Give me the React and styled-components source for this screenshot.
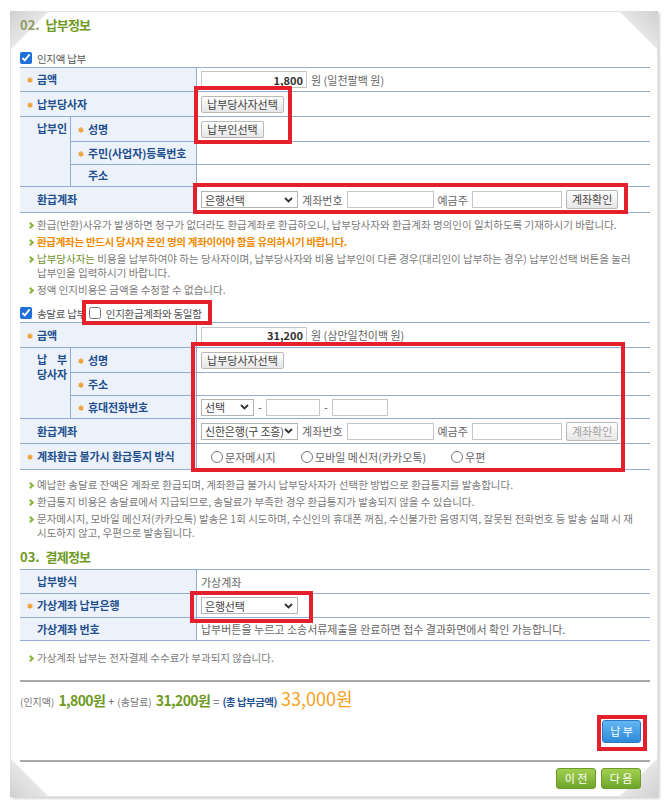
import React from "react";
import styled, { createGlobalStyle } from "styled-components";

const GlobalStyle = createGlobalStyle`
  body {
    margin: 0;
    background: #fff;
    font-family: "Noto Sans CJK KR", "Noto Sans", sans-serif;
  }
  * { box-sizing: border-box; }
`;

const Page = styled.div`
  width: 670px;
  height: 806px;
  padding: 11px 0 0 10px;
`;

const Frame = styled.div`
  position: relative;
  z-index: 0;
  width: 648px;
  height: 786px;
  border: 1px solid #e2e2e2;
  box-shadow: 2px 2px 2px rgba(0, 0, 0, 0.16);
  padding: 2px 7px 6px 9px;
  background: #fff;
`;

const cornerFill = {
  tl: "to bottom right",
  tr: "to bottom left",
  bl: "to top right",
  br: "to top left",
};

const Corner = styled.div`
  position: absolute;
  z-index: -1;
  width: 40px;
  height: 40px;
  ${(p) => (p.$at[0] === "t" ? "top: -1px;" : "bottom: -1px;")}
  ${(p) => (p.$at[1] === "l" ? "left: -1px;" : "right: -1px;")}
  background: linear-gradient(${(p) => cornerFill[p.$at]}, #d0d0d0 0%, #e6e6e6 48%, transparent 50%);
`;

const Annot = styled.div`
  position: absolute;
  border: 4px solid #e3202b;
  pointer-events: none;
`;

const SectionTitle = styled.h3`
  margin: ${(p) => p.$mt || 0}px 0 0;
  height: 20px;
  line-height: 20px;
  font-size: 13px;
  font-weight: 700;
  color: #6f9a1f;
  letter-spacing: -0.8px;
`;

const Num = styled.span`
  color: ${(p) => (p.$dim ? "#8e9b63" : "#6f9a1f")};
  letter-spacing: 0;
  margin-right: 6px;
`;

const CheckRow = styled.div`
  display: flex;
  align-items: center;
  height: 18px;
  margin-top: ${(p) => p.$mt}px;
  font-size: 10.5px;
  letter-spacing: -0.3px;
  color: #555;
  white-space: nowrap;
`;

const Check = styled.input`
  width: 12px;
  height: 12px;
  margin: 0 5px 0 0;
  accent-color: #1e6fd9;
`;

const CheckLabel = styled.label`
  display: flex;
  align-items: center;
  margin-left: ${(p) => p.$ml || 0}px;
`;

const FormTable = styled.table`
  width: 100%;
  border-collapse: separate;
  border-spacing: 0;
  table-layout: fixed;
  border-top: 1px solid #93acd3;
  margin-top: ${(p) => p.$mt || 0}px;
`;

const Row = styled.tr`
  height: ${(p) => p.$h || 24}px;
`;

const Th = styled.th`
  background: #edf2fa;
  border-bottom: 1px solid #93acd3;
  border-right: 1px solid #93acd3;
  text-align: left;
  vertical-align: ${(p) => (p.$top ? "top" : "middle")};
  padding: ${(p) => (p.$top ? "4px" : "0")} 0 0 7px;
  font-size: 11px;
  line-height: 15px;
  font-weight: 700;
  color: #1f4f8e;
  letter-spacing: -0.1px;
  white-space: nowrap;
`;

const Mark = styled.span`
  display: inline-block;
  width: 10px;
  vertical-align: 1px;
  line-height: 0;
`;

const SplitLine = styled.span`
  display: flex;
  justify-content: space-between;
  width: 30px;
  margin-left: 10px;
`;

const Sub = styled.span`
  display: block;
  margin-left: 10px;
`;

const Td = styled.td`
  border-bottom: 1px solid #93acd3;
  padding: 0 0 0 4px;
  font-size: 11px;
  color: #666;
  white-space: nowrap;
`;

const Field = styled.div`
  display: flex;
  align-items: center;
  gap: 4px;
  padding-left: ${(p) => p.$pl || 0}px;
`;

const TextInput = styled.input`
  width: ${(p) => p.$w}px;
  height: 17px;
  border: 1px solid #c6c6c6;
  padding: 0 3px;
  font-family: inherit;
  font-size: 11px;
  font-weight: ${(p) => (p.$bold ? 700 : 400)};
  color: #333;
  text-align: ${(p) => (p.$right ? "right" : "left")};
`;

const GrayButton = styled.button`
  height: ${(p) => p.$h || 17}px;
  padding: 0 5px;
  border: 1px solid #b9b9b9;
  border-radius: 2px;
  background: linear-gradient(#ffffff, #e6e6e6);
  font-family: inherit;
  font-size: 11px;
  line-height: 1;
  color: ${(p) => (p.$muted ? "#a0a0a0" : "#444")};
  white-space: nowrap;
`;

const SelectBox = styled.div`
  width: ${(p) => p.$w}px;
  height: 17px;
  border: 1px solid #b3b3b3;
  background: #fff;
  display: flex;
  align-items: center;
  justify-content: space-between;
  padding: 0 4px 0 3px;
  font-size: 11px;
  letter-spacing: -0.2px;
  color: #444;
  white-space: nowrap;
`;

const Dash = styled.span`
  width: 4px;
  text-align: center;
  color: #555;
`;

const RadioOption = styled.label`
  display: flex;
  align-items: center;
  width: ${(p) => (p.$w ? `${p.$w}px` : "auto")};
  color: #666;
  input {
    width: 12px;
    height: 12px;
    margin: 0 2px 0 0;
  }
`;

const Notes = styled.ul`
  list-style: none;
  margin: ${(p) => p.$mt}px 0 0;
  padding: 0;
`;

const Note = styled.li`
  position: relative;
  margin-top: 3px;
  padding-left: 17px;
  font-size: 10.5px;
  line-height: 14px;
  white-space: nowrap;
  color: ${(p) => (p.$warn ? "#f08a00" : "#7a7a7a")};
  font-weight: ${(p) => (p.$warn ? 700 : 400)};
  letter-spacing: ${(p) => (p.$warn ? "-0.3px" : "0")};
  &:first-child { margin-top: 0; }
  &::before {
    content: "";
    position: absolute;
    left: 8px;
    top: 5px;
    width: 3px;
    height: 3px;
    border-top: 2px solid #8bb33a;
    border-right: 2px solid #8bb33a;
    transform: rotate(45deg);
  }
`;

const Em = styled.span`
  color: #6f8f2c;
`;

const Divider = styled.hr`
  margin: ${(p) => p.$mt}px 0 0;
  border: 0;
  border-top: 2px solid #a9a9a9;
`;

const TotalLine = styled.div`
  display: flex;
  align-items: baseline;
  height: 22px;
  line-height: 22px;
  margin-top: 5px;
  white-space: nowrap;
`;

const Small = styled.span`
  font-size: 10px;
  color: #777;
  margin-right: 4px;
`;

const Op = styled.span`
  font-size: 11px;
  color: #666;
  margin-right: 3px;
`;

const GreenAmt = styled.span`
  font-size: 14px;
  font-weight: 700;
  color: #6f9a1f;
  letter-spacing: -0.6px;
  margin-right: 3px;
`;

const TotalLabel = styled.span`
  font-size: 10.5px;
  font-weight: 700;
  color: #1f4f8e;
  letter-spacing: -0.5px;
  margin-right: 4px;
`;

const GrandAmt = styled.span`
  font-size: 18px;
  color: #f5a01a;
`;

const ActionRow = styled.div`
  display: flex;
  justify-content: flex-end;
  gap: 5px;
  padding-right: 9px;
  margin-top: ${(p) => p.$mt}px;
`;

const ActionButton = styled.button`
  width: ${(p) => p.$w}px;
  height: ${(p) => p.$h}px;
  border-radius: 3px;
  border: 1px solid ${(p) => (p.$blue ? "#2a78c2" : "#6d9a2a")};
  background: ${(p) =>
    p.$blue
      ? "linear-gradient(#62b6f2, #2f8ad8)"
      : "linear-gradient(#a2d050, #6ea52a)"};
  color: #fff;
  font-family: inherit;
  font-size: 11px;
  line-height: 1;
  padding: 0;
`;

const Chevron = () => (
  <svg width="9" height="6" viewBox="0 0 9 6">
    <path d="M1 1l3.5 3.5L8 1" fill="none" stroke="#333" strokeWidth="1.8" />
  </svg>
);

const Star = () => (
  <svg width="6" height="6" viewBox="0 0 6 6">
    <path
      d="M3 0.3v5.4M0.6 1.6l4.8 2.8M0.6 4.4l4.8-2.8"
      stroke="#f0a23a"
      strokeWidth="1.4"
    />
  </svg>
);

const Label = ({ star, children, ...rest }) => (
  <Th {...rest}>
    <Mark>{star && <Star />}</Mark>
    {children}
  </Th>
);

const Select = ({ w, children }) => (
  <SelectBox $w={w}>
    <span>{children}</span>
    <Chevron />
  </SelectBox>
);

const AccountField = ({ bank, muted }) => (
  <Field>
    <Select w={97}>{bank}</Select>
    <span>계좌번호</span>
    <TextInput $w={87} />
    <span>예금주</span>
    <TextInput $w={90} />
    <GrayButton $h={19} $muted={muted}>계좌확인</GrayButton>
  </Field>
);

const Cols = () => (
  <colgroup>
    <col style={{ width: 51 }} />
    <col style={{ width: 126 }} />
    <col />
  </colgroup>
);

export default function App() {
  return (
    <Page>
      <GlobalStyle />
      <Frame>
        <Corner $at="tl" />
        <Corner $at="tr" />
        <Corner $at="bl" />
        <Corner $at="br" />

        <SectionTitle $mt={1}>
          <Num $dim>02.</Num>납부정보
        </SectionTitle>

        <CheckRow $mt={14}>
          <CheckLabel>
            <Check type="checkbox" defaultChecked />
            인지액 납부
          </CheckLabel>
        </CheckRow>

        <FormTable>
          <Cols />
          <tbody>
            <Row $h={24}>
              <Label star colSpan={2}>금액</Label>
              <Td>
                <Field>
                  <TextInput $w={106} $right $bold defaultValue="1,800" />
                  <span>원 (일천팔백 원)</span>
                </Field>
              </Td>
            </Row>
            <Row $h={25}>
              <Label star colSpan={2}>납부당사자</Label>
              <Td>
                <GrayButton>납부당사자선택</GrayButton>
              </Td>
            </Row>
            <Row $h={25}>
              <Th rowSpan={3} $top>
                <Sub>납부인</Sub>
              </Th>
              <Label star>성명</Label>
              <Td>
                <GrayButton>납부인선택</GrayButton>
              </Td>
            </Row>
            <Row $h={23}>
              <Label star>주민(사업자)등록번호</Label>
              <Td />
            </Row>
            <Row $h={22}>
              <Label>주소</Label>
              <Td />
            </Row>
            <Row $h={26}>
              <Label colSpan={2}>환급계좌</Label>
              <Td>
                <AccountField bank="은행선택" />
              </Td>
            </Row>
          </tbody>
        </FormTable>

        <Notes $mt={5}>
          <Note>
            환급(반환)사유가 발생하면 청구가 없더라도 환급계좌로 환급하오니, 납부당사자와 환급계좌 명의인이 일치하도록 기재하시기 바랍니다.
          </Note>
          <Note $warn>
            환급계좌는 반드시 당사자 본인 명의 계좌이어야 함을 유의하시기 바랍니다.
          </Note>
          <Note>
            <Em>납부당사자는</Em> 비용을 납부하여야 하는 당사자이며, 납부당사자와 비용 납부인이 다른 경우(대리인이 납부하는 경우) 납부인선택 버튼을 눌러
            <br />
            납부인을 입력하시기 바랍니다.
          </Note>
          <Note>정액 인지비용은 금액을 수정할 수 없습니다.</Note>
        </Notes>

        <CheckRow $mt={7}>
          <CheckLabel>
            <Check type="checkbox" defaultChecked />
            송달료 납부
          </CheckLabel>
          <CheckLabel $ml={3}>
            <Check type="checkbox" />
            인지환급계좌와 동일함
          </CheckLabel>
        </CheckRow>

        <FormTable>
          <Cols />
          <tbody>
            <Row $h={25}>
              <Label star colSpan={2}>금액</Label>
              <Td>
                <Field>
                  <TextInput $w={106} $right $bold defaultValue="31,200" />
                  <span>원 (삼만일천이백 원)</span>
                </Field>
              </Td>
            </Row>
            <Row $h={25}>
              <Th rowSpan={3} $top>
                <SplitLine>
                  <span>납</span>
                  <span>부</span>
                </SplitLine>
                <Sub>당사자</Sub>
              </Th>
              <Label star>성명</Label>
              <Td>
                <GrayButton>납부당사자선택</GrayButton>
              </Td>
            </Row>
            <Row $h={23}>
              <Label star>주소</Label>
              <Td />
            </Row>
            <Row $h={23}>
              <Label star>휴대전화번호</Label>
              <Td>
                <Field>
                  <Select w={53}>선택</Select>
                  <Dash>-</Dash>
                  <TextInput $w={54} />
                  <Dash>-</Dash>
                  <TextInput $w={56} />
                </Field>
              </Td>
            </Row>
            <Row $h={25}>
              <Label colSpan={2}>환급계좌</Label>
              <Td>
                <AccountField bank="신한은행(구 조흥)" muted />
              </Td>
            </Row>
            <Row $h={26}>
              <Label star colSpan={2}>계좌환급 불가시 환급통지 방식</Label>
              <Td>
                <Field $pl={10}>
                  <RadioOption $w={86}>
                    <input type="radio" name="notice" />
                    문자메시지
                  </RadioOption>
                  <RadioOption $w={146}>
                    <input type="radio" name="notice" />
                    모바일 메신저(카카오톡)
                  </RadioOption>
                  <RadioOption>
                    <input type="radio" name="notice" />
                    우편
                  </RadioOption>
                </Field>
              </Td>
            </Row>
          </tbody>
        </FormTable>

        <Notes $mt={8}>
          <Note>
            예납한 송달료 잔액은 계좌로 환급되며, 계좌환급 불가시 납부당사자가 선택한 방법으로 환급통지를 발송합니다.
          </Note>
          <Note>
            환급통지 비용은 송달료에서 지급되므로, 송달료가 부족한 경우 환급통지가 발송되지 않을 수 있습니다.
          </Note>
          <Note>
            문자메시지, 모바일 메신저(카카오톡) 발송은 1회 시도하며, 수신인의 휴대폰 꺼짐, 수신불가한 음영지역, 잘못된 전화번호 등 발송 실패 시 재
            <br />
            시도하지 않고, 우편으로 발송됩니다.
          </Note>
        </Notes>

        <SectionTitle $mt={7}>
          <Num>03.</Num>결제정보
        </SectionTitle>

        <FormTable $mt={2}>
          <Cols />
          <tbody>
            <Row>
              <Label colSpan={2}>납부방식</Label>
              <Td>가상계좌</Td>
            </Row>
            <Row $h={24}>
              <Label star colSpan={2}>가상계좌 납부은행</Label>
              <Td>
                <Select w={97}>은행선택</Select>
              </Td>
            </Row>
            <Row $h={23}>
              <Label colSpan={2}>가상계좌 번호</Label>
              <Td>납부버튼을 누르고 소송서류제출을 완료하면 접수 결과화면에서 확인 가능합니다.</Td>
            </Row>
          </tbody>
        </FormTable>

        <Notes $mt={10}>
          <Note>가상계좌 납부는 전자결제 수수료가 부과되지 않습니다.</Note>
        </Notes>

        <Divider $mt={15} />

        <TotalLine>
          <Small>(인지액)</Small>
          <GreenAmt>1,800원</GreenAmt>
          <Op>+</Op>
          <Small>(송달료)</Small>
          <GreenAmt>31,200원</GreenAmt>
          <Op>=</Op>
          <TotalLabel>(총 납부금액)</TotalLabel>
          <GrandAmt>33,000원</GrandAmt>
        </TotalLine>

        <ActionRow $mt={11}>
          <ActionButton $blue $w={39} $h={23}>납 부</ActionButton>
        </ActionRow>

        <Divider $mt={17} />

        <ActionRow $mt={6}>
          <ActionButton $w={40} $h={21}>이 전</ActionButton>
          <ActionButton $w={40} $h={21}>다 음</ActionButton>
        </ActionRow>

        <Annot style={{ left: 183, top: 74, width: 98, height: 58 }} />
        <Annot style={{ left: 182, top: 171, width: 435, height: 31 }} />
        <Annot style={{ left: 71, top: 288, width: 130, height: 25 }} />
        <Annot style={{ left: 180, top: 330, width: 434, height: 130 }} />
        <Annot style={{ left: 179, top: 579, width: 123, height: 32 }} />
        <Annot style={{ left: 586, top: 703, width: 50, height: 36 }} />
      </Frame>
    </Page>
  );
}
